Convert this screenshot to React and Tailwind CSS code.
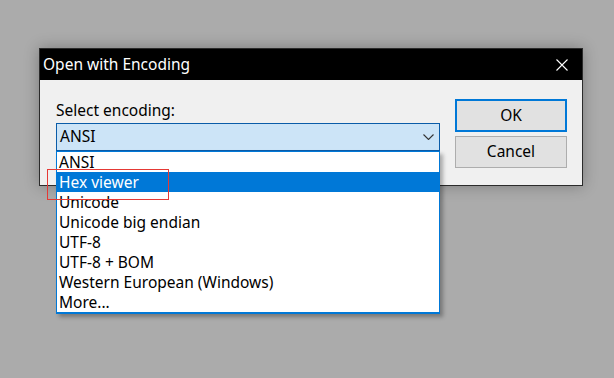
import React from 'react';

const ENCODINGS = [
  'ANSI',
  'Hex viewer',
  'Unicode',
  'Unicode big endian',
  'UTF-8',
  'UTF-8 + BOM',
  'Western European (Windows)',
  'More...',
];

const CloseIcon = () => (
  <svg width="12" height="12" viewBox="0 0 12 12" className="block">
    <path d="M0.5 0.5 L11.5 11.5 M11.5 0.5 L0.5 11.5" stroke="#fff" strokeWidth="1.1" fill="none" />
  </svg>
);

const Chevron = () => (
  <svg width="11" height="6" viewBox="0 0 11 6" className="block">
    <path d="M0.5 0.5 L5.5 5.5 L10.5 0.5" stroke="#333" strokeWidth="1.1" fill="none" />
  </svg>
);

export default function App() {
  const selected = 1;

  return (
    <div className="relative w-[614px] h-[378px] bg-[#ababab] pt-[48px] pl-[39px] font-['Noto_Sans',sans-serif] text-black overflow-hidden">
      {/* dialog */}
      <div className="relative w-[544px] h-[138px] border border-[#2b2b2b] bg-[#f0f0f0] shadow-[0_0_14px_rgba(0,0,0,0.28)]">
        <div className="h-[31px] bg-black flex items-center justify-between pl-[3px] pr-[14px]">
          <span className="text-white text-[15.5px] leading-none">Open with Encoding</span>
          <CloseIcon />
        </div>

        <div className="flex pl-[16px] pt-[19px]">
          <div className="w-[384px]">
            <div className="text-[15.5px] leading-[20px] h-[20px] mt-[1px]">Select encoding:</div>

            {/* combobox */}
            <div className="relative mt-[3px] h-[28px] border border-[#0a5ca8] bg-[#cce4f7] flex items-center justify-between pl-[3px] pr-[5px]">
              <span className="text-[15.5px] leading-none">ANSI</span>
              <Chevron />

              {/* open list */}
              <ul className="absolute left-[-1px] top-[27px] w-[384px] bg-white border border-[#0078d7] border-b-2 shadow-[3px_3px_4px_rgba(0,0,0,0.3)] z-10">
                {ENCODINGS.map((name, i) => (
                  <li
                    key={name}
                    className={`h-[20px] pl-[2px] text-[15.5px] leading-[20px] whitespace-nowrap ${i === selected ? 'bg-[#0078d7] text-white' : 'text-black'}`}
                  >
                    {name}
                  </li>
                ))}
              </ul>
            </div>
          </div>

          <div className="ml-[15px] flex flex-col gap-[4px]">
            <button className="w-[112px] h-[33px] border-2 border-[#0078d7] bg-[#e1e1e1] text-[15.5px] leading-none">OK</button>
            <button className="w-[112px] h-[32px] border border-[#adadad] bg-[#e1e1e1] text-[15.5px] leading-none">Cancel</button>
          </div>
        </div>
      </div>

      {/* annotation box */}
      <div className="absolute left-[47px] top-[169px] w-[122px] h-[31px] border border-[#e53935] z-20" />
    </div>
  );
}
